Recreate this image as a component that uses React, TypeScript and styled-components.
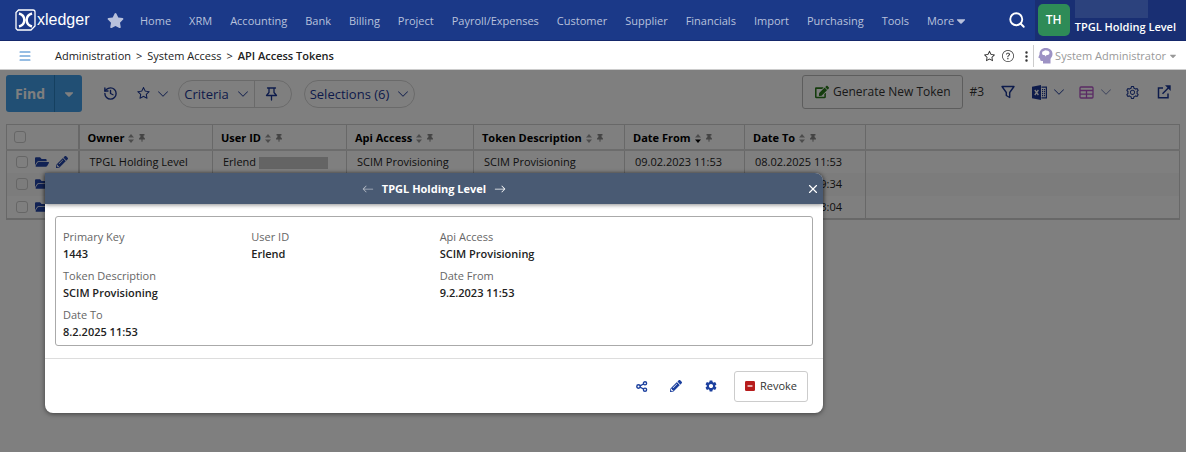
import React from "react";
import styled, { createGlobalStyle } from "styled-components";
import { FaStar, FaCaretDown, FaPencilAlt, FaFolderOpen, FaThumbtack, FaEdit } from "react-icons/fa";
import { BsChevronDown, BsQuestionCircle, BsThreeDotsVertical, BsArrowLeft, BsArrowRight, BsList } from "react-icons/bs";
import { AiOutlineSetting, AiOutlineStar } from "react-icons/ai";
import { MdSettings } from "react-icons/md";
import { LuHistory, LuX, LuSearch } from "react-icons/lu";

const GlobalStyle = createGlobalStyle`
  * { box-sizing: border-box; }
  body {
    margin: 0;
    background: #fff;
    color: #222;
    font: 11px/16px "Open Sans", "Noto Sans", sans-serif;
  }
  button { font: inherit; color: inherit; margin: 0; padding: 0; border: 0; background: none; display: inline-flex; align-items: center; justify-content: center; }
  a { color: inherit; text-decoration: none; }
  svg { flex: none; display: block; }
`;

const Page = styled.div`
  min-height: 100vh;
  display: flex;
  flex-direction: column;
`;

const TopBar = styled.header`
  height: 41px;
  flex: none;
  display: flex;
  align-items: center;
  background: #1b3988;
  border-bottom: 1px solid #15286b;
  padding-left: 15px;
  color: #b8c1dc;
  white-space: nowrap;
`;

const Logo = styled.a`
  display: flex;
  flex: none;
  align-items: center;
  gap: 1px;
  width: 92px;
  color: #fff;
  font: 16px/20px "Liberation Sans", Arial, sans-serif;
`;

const Nav = styled.nav`
  display: flex;
  align-items: center;
  gap: 18px;
  flex: 1;
  padding-top: 1px;
`;

const Favourites = styled.a`
  margin-right: -2px;
`;

const NavLink = styled.a`
  display: flex;
  align-items: center;
`;

const SearchButton = styled.button`
  width: 36px;
  height: 40px;
  color: #fff;
`;

const Account = styled.div`
  align-self: stretch;
  display: flex;
  align-items: center;
  gap: 5px;
  padding: 0 10px 0 3px;
  background: #192f73;
  color: #fff;
  font-weight: 600;
`;

const Avatar = styled.span`
  width: 32px;
  height: 32px;
  border-radius: 5px;
  background: #2e8b57;
  display: flex;
  align-items: center;
  justify-content: center;
  font-size: 12px;
`;

const AccountText = styled.div`
  align-self: stretch;
  display: flex;
  flex-direction: column;
  line-height: 18px;
`;

const Redacted = styled.span<{ $tone: string; $width: number; $height: number }>`
  display: inline-block;
  flex: none;
  vertical-align: middle;
  background: ${(p) => p.$tone};
  width: ${(p) => p.$width}px;
  height: ${(p) => p.$height}px;
`;

const CrumbBar = styled.div`
  height: 28px;
  flex: none;
  display: flex;
  align-items: center;
  padding: 2px 8px 0 20px;
  white-space: nowrap;
`;

const MenuButton = styled.button`
  width: 10px;
  margin-right: 25px;
  color: #2f7cc8;
`;

const Crumbs = styled.nav`
  display: flex;
  gap: 5px;
  flex: 1;
`;

const Current = styled.span`
  font-weight: 600;
`;

const CrumbTools = styled.div`
  display: flex;
  align-items: center;
  gap: 6px;
  color: #333;
`;

const DotsButton = styled.button`
  margin-right: -6px;
`;

const RoleButton = styled.button`
  gap: 2px;
  height: 22px;
  padding-left: 4px;
  border-left: 1px solid #ccc;
  color: #999;
`;

const Workspace = styled.main`
  position: relative;
  flex: 1;
  padding: 5px 6px 0;
  border-top: 1px solid #ccc;
`;

const Toolbar = styled.div`
  height: 37px;
  display: flex;
  align-items: center;
  color: #1b3796;
  font-size: 13px;
  white-space: nowrap;
`;

const Find = styled.div`
  display: flex;
  height: 37px;
  width: 76px;
  margin-right: 21px;
  border-radius: 3px;
  background: #429ee8;
  color: #fff;
  font-size: 14px;
  font-weight: 700;
  overflow: hidden;
  button:first-child { flex: 1; }
  button:last-child { width: 28px; border-left: 1px solid #2a80c0; }
`;

const IconButton = styled.button<{ $gap?: number }>`
  margin-right: ${(p) => p.$gap ?? 0}px;
  gap: 6px;
`;

const Pill = styled.div<{ $width: number }>`
  display: flex;
  width: ${(p) => p.$width}px;
  height: 28px;
  margin-right: 12px;
  border: 1px solid #d4d4d4;
  border-radius: 14px;
  button { flex: 1; gap: 8px; }
  button + button { flex: none; width: 37px; padding-right: 4px; border-left: 1px solid #d4d4d4; }
`;

const Actions = styled.div`
  align-self: flex-start;
  height: 34px;
  margin-left: auto;
  display: flex;
  align-items: center;
`;

const Generate = styled.button`
  height: 34px;
  width: 161px;
  gap: 4px;
  border: 1px solid #bbb;
  border-radius: 3px;
  color: #333;
  font-size: 12px;
`;

const Count = styled.span`
  margin: 0 17px 0 6px;
  color: #333;
  font-size: 12px;
`;

const Table = styled.table`
  width: 100%;
  margin-top: 12px;
  table-layout: fixed;
  border-collapse: collapse;
  border: 1px solid #d0d0d0;
  border-bottom-width: 2px;
  white-space: nowrap;
  td, th { height: 23px; padding: 0 0 0 10px; text-align: left; border-left: 1px solid #d0d0d0; overflow: hidden; }
  th { height: 25px; padding-left: 8px; border-bottom: 2px solid #d8d8d8; color: #000; font-weight: 700; }
  th:first-child { padding-left: 7px; }
  td:first-child { padding-left: 9px; }
  td:nth-child(2), th:nth-child(2) { border-left-width: 2px; }
  tbody tr:nth-child(even) { background: #f8f8f8; }
`;

const HeadCell = styled.div`
  display: flex;
  align-items: center;
  gap: 4px;
  padding-top: 3px;
  color: #888;
  span { color: #000; }
`;

const RowTools = styled.div`
  display: flex;
  align-items: center;
  gap: 7px;
  color: #2344a8;
`;

const Check = styled.input`
  appearance: none;
  display: block;
  width: 12px;
  height: 12px;
  margin: 0;
  border: 1px solid #ccc;
  border-radius: 3px;
`;

const Shade = styled.div`
  position: absolute;
  inset: 0;
  background: rgba(0, 0, 0, 0.5);
`;

const Dialog = styled.section`
  position: absolute;
  top: 103px;
  left: 45px;
  width: 778px;
  border-radius: 0 8px 8px 8px;
  background: #fff;
  box-shadow: 0 1px 5px rgba(0, 0, 0, 0.5);
`;

const DialogHead = styled.header`
  height: 31px;
  display: flex;
  align-items: center;
  justify-content: center;
  gap: 8px;
  position: relative;
  border-radius: 0 8px 0 0;
  background: #495a73;
  color: #fff;
  box-shadow: 0 1px 4px rgba(0, 0, 0, 0.45);
`;

const DialogTitle = styled.h2`
  margin: 0;
  font-size: 11px;
  font-weight: 700;
`;

const Dim = styled.button`
  opacity: 0.6;
`;

const Close = styled.button`
  position: absolute;
  top: 0;
  right: 2px;
  width: 16px;
  height: 31px;
`;

const Fields = styled.dl`
  display: grid;
  grid-template-columns: repeat(3, 1fr) 184px;
  row-gap: 5px;
  margin: 12px 10px;
  padding: 11px 0 5px 7px;
  border: 1px solid #aaa;
  border-radius: 3px;
`;

const Field = styled.div<{ $column?: number }>`
  grid-column: ${(p) => p.$column ?? "auto"};
  dt { color: #666; line-height: 17px; }
  dd { margin: 0; font-weight: 600; line-height: 17px; }
`;

const DialogFoot = styled.footer`
  height: 55px;
  display: flex;
  align-items: center;
  justify-content: flex-end;
  gap: 16px;
  padding-right: 15px;
  border-top: 1px solid #ddd;
  color: #1b3f9e;
`;

const FootIcons = styled.div`
  display: flex;
  align-items: center;
  gap: 22px;
`;

const Revoke = styled.button`
  width: 74px;
  height: 31px;
  gap: 5px;
  border: 1px solid #ccc;
  border-radius: 3px;
  color: #333;
`;

const LogoMark = () => (
  <svg width="21" height="22" viewBox="0 0 21 22" fill="none" stroke="#fff">
    <path d="M3.500 1H18q2 0 2 2v14l-4 4H2.500L1 19.500V3.500z" strokeWidth="1.300" />
    <path d="M4 4.500C7.500 5.500 9.300 8 9.300 11S7.500 16.500 4 17.500M17 4.500C13.500 5.500 11.700 8 11.700 11s1.800 5.500 5.300 6.500" strokeWidth="2.400" />
  </svg>
);

const HeadIcon = () => (
  <svg width="15" height="16" viewBox="0 0 15 16">
    <path fill="#9d92c4" d="M7.500 0c4.500 0 7 2.500 7 6 0 2.500-1.500 3.500-2 5v4.500H5V13H3.500Q2 13 2 10.500L.3 9.600 1.500 6.500C1.300 2.500 4 0 7.500 0z" />
    <path fill="#fff" d="M4 5q0-2 2-2 1-1.200 2.500-.5 3 0 3 2.500 0 2-2 2H8.500L7.800 8.500 6.500 7H5Q4 6.500 4 5z" />
  </svg>
);

const FilterIcon = () => (
  <svg width="14" height="14" viewBox="0 0 14 14" fill="none" stroke="currentColor" strokeWidth="1.400" strokeLinejoin="round">
    <path d="M1 1.500h12L8.700 7.500v5L5.300 10.500v-3z" />
  </svg>
);

const ExcelIcon = () => (
  <svg width="15" height="15" viewBox="0 0 15 15">
    <path fill="currentColor" d="M0 1.800L9 0v15L0 13.200zM9.500 1.500H15v12H9.500v-1.200H13.800V2.700H9.500zM10 4h1v1.200h-1zM11.800 4h1.300v1.200h-1.300zM10 6h1v1.200h-1zM11.800 6h1.300v1.200h-1.300zM10 8h1v1.200h-1zM11.800 8h1.300v1.200h-1.300zM10 10h1v1.200h-1zM11.800 10h1.300v1.200h-1.300z" />
    <path stroke="#fff" strokeWidth="1.300" d="M2.800 5l3.600 5M6.400 5l-3.600 5" />
  </svg>
);

const PushPin = () => (
  <svg width="13" height="14" viewBox="0 0 13 14" fill="none" stroke="currentColor" strokeWidth="1.300" strokeLinecap="round" strokeLinejoin="round">
    <path d="M2.500 1h8M4 1v4.500L1.500 8.500h10L9 5.500V1M6.500 8.500V13" />
  </svg>
);

const OpenIcon = () => (
  <svg width="14" height="14" viewBox="0 0 14 14" fill="none" stroke="currentColor" strokeWidth="1.500">
    <path d="M6 3H1.500v9.800H11V8.500M5.500 8.800L11.500 2.800" />
    <path fill="currentColor" stroke="none" d="M8 .3h5.700V6z" />
  </svg>
);

const GridIcon = () => (
  <svg width="15" height="13" viewBox="0 0 15 13" fill="none" stroke="#b455c8" strokeWidth="1.300">
    <rect x="1" y="1" width="13" height="11" rx="1" />
    <path d="M1 4.500h13M1 8.200h13M7.500 4.500V12" />
  </svg>
);

const ShareIcon = () => (
  <svg width="12" height="11" viewBox="0 0 12 11" fill="none" stroke="currentColor" strokeWidth="1.400">
    <circle cx="2.500" cy="5.500" r="1.700" />
    <circle cx="9" cy="2.300" r="1.600" />
    <circle cx="9" cy="8.700" r="1.600" />
    <path d="M4 4.800L7.500 3M4 6.200L7.500 8" />
  </svg>
);

const SortIcon = ({ down }: { down?: boolean }) => (
  <svg width="6" height="9" viewBox="0 0 6 9">
    <path fill="#999" d="M3 0l3 3.500H0z" />
    <path fill={down ? "#000" : "#999"} d="M0 5.500h6L3 9z" />
  </svg>
);

const MinusBox = () => (
  <svg width="10" height="10" viewBox="0 0 11 11">
    <rect width="11" height="11" rx="1.500" fill="#b71c1c" />
    <path stroke="#fff" strokeWidth="1.400" d="M2.800 5.500h5.400" />
  </svg>
);

const links = ["Home", "XRM", "Accounting", "Bank", "Billing", "Project", "Payroll/Expenses", "Customer", "Supplier", "Financials", "Import", "Purchasing", "Tools"];
const heads = ["Owner", "User ID", "Api Access", "Token Description", "Date From", "Date To"];
const widths = [72, 134, 134, 127, 151, 120, 121];
const rows = [
  ["TPGL Holding Level", "Erlend", "SCIM Provisioning", "SCIM Provisioning", "09.02.2023 11:53", "08.02.2025 11:53"],
  ["", "", "", "", "", "08.02.2025 09:34"],
  ["", "", "", "", "", "08.02.2025 13:04"],
];
const fields: { label: string; value: string; column?: number }[] = [
  { label: "Primary Key", value: "1443" },
  { label: "User ID", value: "Erlend" },
  { label: "Api Access", value: "SCIM Provisioning" },
  { label: "Token Description", value: "SCIM Provisioning", column: 1 },
  { label: "Date From", value: "9.2.2023 11:53", column: 3 },
  { label: "Date To", value: "8.2.2025 11:53", column: 1 },
];

export default function App() {
  return (
    <Page>
      <GlobalStyle />
      <TopBar>
        <Logo href="#"><LogoMark />xledger</Logo>
        <Nav>
          <Favourites href="#" aria-label="Favourites"><FaStar size={17} /></Favourites>
          {links.map((l) => <NavLink href="#" key={l}>{l}</NavLink>)}
          <NavLink href="#">More<FaCaretDown size={14} /></NavLink>
        </Nav>
        <SearchButton aria-label="Search"><LuSearch size={18} strokeWidth={2.5} /></SearchButton>
        <Account>
          <Avatar>TH</Avatar>
          <AccountText>
            <Redacted $tone="#2c427d" $width={73} $height={18} />
            <span>TPGL Holding Level</span>
          </AccountText>
        </Account>
      </TopBar>
      <CrumbBar>
        <MenuButton aria-label="Menu"><BsList size={16} /></MenuButton>
        <Crumbs>
          <a href="#">Administration</a><span>&gt;</span>
          <a href="#">System Access</a><span>&gt;</span>
          <Current>API Access Tokens</Current>
        </Crumbs>
        <CrumbTools>
          <button aria-label="Favourite"><AiOutlineStar size={13} /></button>
          <button aria-label="Help"><BsQuestionCircle size={12} /></button>
          <DotsButton aria-label="More options"><BsThreeDotsVertical size={13} /></DotsButton>
          <RoleButton><HeadIcon />System Administrator<FaCaretDown size={10} /></RoleButton>
        </CrumbTools>
      </CrumbBar>
      <Workspace>
        <Toolbar>
          <Find><button>Find</button><button aria-label="Find options"><FaCaretDown size={14} /></button></Find>
          <IconButton $gap={18} aria-label="History"><LuHistory size={15} strokeWidth={2.2} /></IconButton>
          <IconButton $gap={9} aria-label="Favourites"><AiOutlineStar size={15} /><BsChevronDown size={12} /></IconButton>
          <Pill $width={114}>
            <button>Criteria<BsChevronDown size={12} /></button>
            <button aria-label="Pin"><PushPin /></button>
          </Pill>
          <Pill $width={111}><button>Selections (6)<BsChevronDown size={12} /></button></Pill>
          <Actions>
            <Generate><FaEdit size={14} color="#2a7a1a" />Generate New Token</Generate>
            <Count>#3</Count>
            <IconButton $gap={17} aria-label="Filter"><FilterIcon /></IconButton>
            <IconButton $gap={14} aria-label="Export"><ExcelIcon /><BsChevronDown size={12} /></IconButton>
            <IconButton $gap={13} aria-label="Layout"><GridIcon /><BsChevronDown size={12} color="#7784b8" /></IconButton>
            <IconButton $gap={17} aria-label="Settings"><AiOutlineSetting size={15} /></IconButton>
            <IconButton $gap={9} aria-label="Open in new window"><OpenIcon /></IconButton>
          </Actions>
        </Toolbar>
        <Table>
          <colgroup>{widths.map((w, i) => <col key={i} width={w} />)}<col /></colgroup>
          <thead>
            <tr>
              <th><Check type="checkbox" aria-label="Select all" /></th>
              {heads.map((h) => (
                <th key={h}><HeadCell><span>{h}</span><SortIcon down={h === "Date From"} /><FaThumbtack size={8} /></HeadCell></th>
              ))}
              <th />
            </tr>
          </thead>
          <tbody>
            {rows.map((r, i) => (
              <tr key={i}>
                <td><RowTools><Check type="checkbox" aria-label="Select row" /><FaFolderOpen size={14} /><FaPencilAlt size={12} /></RowTools></td>
                {r.map((c, j) => (
                  <td key={j}>{c}{j === 1 && c && <> <Redacted $tone="#c8c8c8" $width={69} $height={12} /></>}</td>
                ))}
                <td />
              </tr>
            ))}
          </tbody>
        </Table>
        <Shade />
        <Dialog role="dialog" aria-label="TPGL Holding Level">
          <DialogHead>
            <Dim aria-label="Previous"><BsArrowLeft size={12} /></Dim>
            <DialogTitle>TPGL Holding Level</DialogTitle>
            <button aria-label="Next"><BsArrowRight size={12} /></button>
            <Close aria-label="Close"><LuX size={14} /></Close>
          </DialogHead>
          <Fields>
            {fields.map((f) => (
              <Field key={f.label} $column={f.column}><dt>{f.label}</dt><dd>{f.value}</dd></Field>
            ))}
          </Fields>
          <DialogFoot>
            <FootIcons>
              <button aria-label="Share"><ShareIcon /></button>
              <button aria-label="Edit"><FaPencilAlt size={12} /></button>
              <button aria-label="Settings"><MdSettings size={14} /></button>
            </FootIcons>
            <Revoke><MinusBox />Revoke</Revoke>
          </DialogFoot>
        </Dialog>
      </Workspace>
    </Page>
  );
}
